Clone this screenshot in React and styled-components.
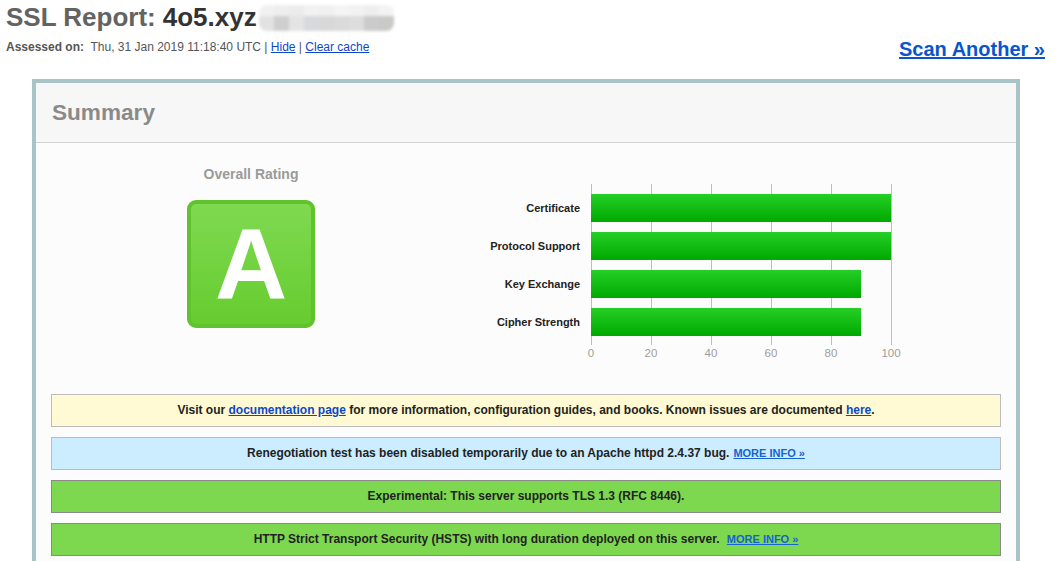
import React from "react";
import styled, { createGlobalStyle } from "styled-components";

const Global = createGlobalStyle`
  html, body { margin: 0; padding: 0; overflow: hidden; background: #fff; }
  body { font-family: "Liberation Sans", Arial, Helvetica, sans-serif; color: #333; }
  * { box-sizing: border-box; }
`;

const Page = styled.div`
  width: 1060px;
  padding: 0 15px 0 6px;
`;

const TopBar = styled.div`
  display: flex;
  justify-content: space-between;
  align-items: flex-start;
`;

const TitleBlock = styled.div`
  display: flex;
  flex-direction: column;
`;

const Title = styled.h1`
  margin: 0;
  font-size: 26px;
  line-height: 34px;
  font-weight: bold;
  color: #636363;
  display: flex;
  align-items: center;
  white-space: nowrap;
`;

const Host = styled.span`
  color: #333;
  margin-left: 7px;
`;

const Redacted = styled.span`
  display: inline-grid;
  grid-template-columns: repeat(9, 15px);
  grid-template-rows: 11px 15px;
  margin-left: 2px;
  margin-top: 2px;
  filter: blur(1.6px);
  border-radius: 8px;
  overflow: hidden;
`;

const Pixel = styled.span`
  background: ${(p) => p.$c};
`;

const Assessed = styled.div`
  margin-top: 6px;
  font-size: 12px;
  line-height: 15px;
  color: #555;
  white-space: pre;
`;

const Strong = styled.b`
  color: #555;
`;

const SmallLink = styled.a`
  color: #0b47cc;
  text-decoration: underline;
  cursor: pointer;
`;

const ScanLink = styled.a`
  margin-top: 37px;
  font-size: 20px;
  line-height: 24px;
  font-weight: bold;
  color: #0a55cc;
  text-decoration: underline;
  white-space: nowrap;
  cursor: pointer;
`;

const ReportBox = styled.div`
  margin: 18px 0 0 26px;
  width: 988px;
  border: 4px solid #a9c4c7;
  border-bottom: none;
  background: #fcfcfc;
`;

const BoxHeader = styled.div`
  height: 60px;
  background: #f7f7f7;
  border-bottom: 1px solid #cfd2d2;
  padding: 1px 0 0 16px;
  font-size: 22.6px;
  font-weight: bold;
  line-height: 58px;
  color: #8a8a8a;
`;

const BoxBody = styled.div`
  padding: 0 15px 20px 15px;
`;

const SummaryRow = styled.div`
  display: flex;
  align-items: flex-start;
`;

const RatingCol = styled.div`
  width: 400px;
  display: flex;
  flex-direction: column;
  align-items: center;
  padding-top: 22px;
`;

const RatingTitle = styled.div`
  font-size: 14px;
  line-height: 18px;
  font-weight: bold;
  color: #9a9a9a;
`;

const Grade = styled.div`
  margin-top: 17px;
  width: 128px;
  height: 128px;
  border: 4px solid #60c22d;
  border-radius: 9px;
  background: linear-gradient(to bottom, #7fd951, #66cc2f);
  display: flex;
  align-items: center;
  justify-content: center;
  color: #fff;
  font-size: 100px;
  font-weight: bold;
  line-height: 100px;
`;

const ChartCol = styled.div`
  padding-top: 41px;
  display: grid;
  grid-template-columns: 129px 301px;
  column-gap: 11px;
`;

const Labels = styled.div`
  display: flex;
  flex-direction: column;
  gap: 10px;
  padding-top: 10px;
`;

const Label = styled.div`
  height: 28px;
  line-height: 28px;
  text-align: right;
  font-size: 11px;
  font-weight: bold;
  color: #222;
  white-space: nowrap;
`;

const Plot = styled.div`
  height: 161px;
  padding-top: 10px;
  display: flex;
  flex-direction: column;
  gap: 10px;
  background: repeating-linear-gradient(
    to right,
    #bdbdbd 0,
    #bdbdbd 1px,
    transparent 1px,
    transparent 60px
  );
`;

const Bar = styled.div`
  height: 28px;
  background: linear-gradient(to bottom, #25cf25, #00a900);
`;

const Ticks = styled.div`
  grid-column: 2;
  width: 360px;
  margin-left: -30px;
  display: flex;
`;

const Tick = styled.div`
  flex: none;
  width: 60px;
  text-align: center;
  font-size: 11.5px;
  line-height: 16px;
  color: #9e9e9e;
`;

const Notices = styled.div`
  margin-top: 33px;
  display: flex;
  flex-direction: column;
  gap: 10px;
`;

const tones = {
  warning: { bg: "#fffad3", border: "#bcbcbc" },
  info: { bg: "#ccedff", border: "#bcbcbc" },
  good: { bg: "#7dd850", border: "#8a8a8a" },
};

const Notice = styled.div`
  height: 33px;
  border: 1px solid ${(p) => tones[p.$tone].border};
  background: ${(p) => tones[p.$tone].bg};
  display: flex;
  align-items: center;
  justify-content: center;
  padding-bottom: 1px;
  font-size: 12px;
  font-weight: bold;
  color: #222;
  white-space: pre;
`;

const NoticeLink = styled.a`
  color: #0b47cc;
  text-decoration: underline;
  cursor: pointer;
`;

const MoreInfo = styled.a`
  margin-left: 4px;
  font-size: 11px;
  font-weight: bold;
  color: #1463d1;
  text-decoration: underline;
  cursor: pointer;
`;

const pixels = [
  "#f1f1f1", "#eeeeee", "#ececec", "#f2f2f2", "#f0f0f0", "#f4f4f4", "#f2f2f2", "#eeeeee", "#f3f3f3",
  "#e2e2e2", "#cfcfcf", "#e4e4e4", "#d8d9dd", "#d8d8d8", "#dadada", "#dddddd", "#cbcbcb", "#c9c9c7",
];

const bars = [
  { name: "Certificate", value: 100 },
  { name: "Protocol Support", value: 100 },
  { name: "Key Exchange", value: 90 },
  { name: "Cipher Strength", value: 90 },
];

const ticks = [0, 20, 40, 60, 80, 100];

export default function App() {
  return (
    <>
      <Global />
      <Page>
        <TopBar>
          <TitleBlock>
            <Title>
              SSL Report:<Host>4o5.xyz</Host>
              <Redacted>
                {pixels.map((c, i) => (
                  <Pixel key={i} $c={c} />
                ))}
              </Redacted>
            </Title>
            <Assessed>
              <Strong>Assessed on:</Strong>
              {"  Thu, 31 Jan 2019 11:18:40 UTC | "}
              <SmallLink>Hide</SmallLink>
              {" | "}
              <SmallLink>Clear cache</SmallLink>
            </Assessed>
          </TitleBlock>
          <ScanLink>Scan Another »</ScanLink>
        </TopBar>

        <ReportBox>
          <BoxHeader>Summary</BoxHeader>
          <BoxBody>
            <SummaryRow>
              <RatingCol>
                <RatingTitle>Overall Rating</RatingTitle>
                <Grade>A</Grade>
              </RatingCol>
              <ChartCol>
                <Labels>
                  {bars.map((b) => (
                    <Label key={b.name}>{b.name}</Label>
                  ))}
                </Labels>
                <Plot>
                  {bars.map((b) => (
                    <Bar key={b.name} style={{ width: `${b.value * 3}px` }} />
                  ))}
                </Plot>
                <Ticks>
                  {ticks.map((t) => (
                    <Tick key={t}>{t}</Tick>
                  ))}
                </Ticks>
              </ChartCol>
            </SummaryRow>

            <Notices>
              <Notice $tone="warning">
                {"Visit our "}
                <NoticeLink>documentation page</NoticeLink>
                {" for more information, configuration guides, and books. Known issues are documented "}
                <NoticeLink>here</NoticeLink>.
              </Notice>
              <Notice $tone="info">
                Renegotiation test has been disabled temporarily due to an Apache httpd 2.4.37 bug.
                <MoreInfo>MORE INFO »</MoreInfo>
              </Notice>
              <Notice $tone="good">Experimental: This server supports TLS 1.3 (RFC 8446).</Notice>
              <Notice $tone="good">
                {"HTTP Strict Transport Security (HSTS) with long duration deployed on this server. "}
                <MoreInfo>MORE INFO »</MoreInfo>
              </Notice>
            </Notices>
          </BoxBody>
        </ReportBox>
      </Page>
    </>
  );
}
